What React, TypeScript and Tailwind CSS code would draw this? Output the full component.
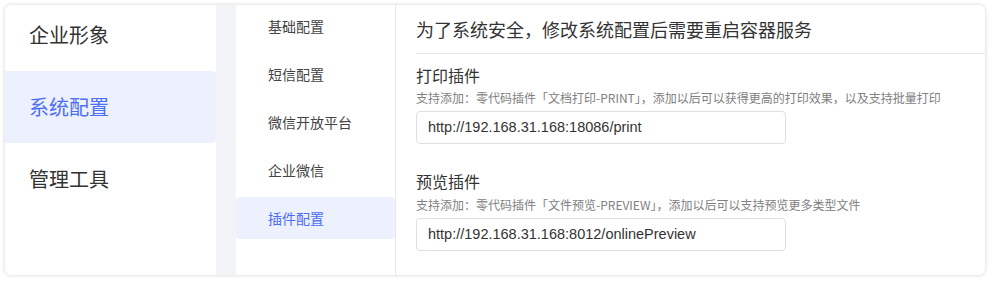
import React from "react";

const cjk = { fontFamily: '"Noto Sans CJK SC", "Liberation Sans", sans-serif' };

export default function App() {
  const left = ["企业形象", "系统配置", "管理工具"];
  const sub = ["基础配置", "短信配置", "微信开放平台", "企业微信", "插件配置"];
  return (
    <div className="w-[992px] h-[281px] bg-white pt-[5px] pl-[5px]" style={cjk}>
      <div className="w-[980px] h-[270px] rounded-[6px] bg-white shadow-[0_0_4px_rgba(0,0,0,0.18)] overflow-hidden flex">
        <div className="w-[211px] shrink-0 -mt-[6px]">
          {left.map((t, i) => (
            <div
              key={t}
              className={`h-[72px] flex items-center pl-[24px] text-[20px] leading-[28px] rounded-r-[4px] ${
                i === 1 ? "bg-[#edf0fd] text-[#4c6ef5]" : "text-[#333333]"
              }`}
            >
              {t}
            </div>
          ))}
        </div>
        <div className="w-[20px] shrink-0 bg-[#f3f4f8]" />
        <div className="w-[160px] shrink-0 border-r border-[#e8e8ea] flex flex-col gap-[6px]">
          {sub.map((t, i) => (
            <div
              key={t}
              className={`h-[42px] flex items-center pl-[32px] text-[14px] leading-[20px] rounded-[4px] ${
                i === 4 ? "bg-[#edf0fd] text-[#4c6ef5]" : "text-[#444444]"
              }`}
            >
              {t}
            </div>
          ))}
        </div>
        <div className="flex-1 pl-[20px]">
          <div className="h-[49px] border-b border-[#e6e6e8] flex items-center text-[18px] leading-[26px] text-[#333333] pb-[1px]">
            为了系统安全，修改系统配置后需要重启容器服务
          </div>
          <div className="pt-[9px]">
            <div className="text-[16px] leading-[24px] text-[#333333]">打印插件</div>
            <div className="text-[12px] leading-[20px] text-[#808080] mt-[1px]">
              支持添加：零代码插件「文档打印-PRINT」，添加以后可以获得更高的打印效果，以及支持批量打印
            </div>
            <div
              className="mt-[3px] w-[370px] h-[33px] border border-[#dcdfe6] rounded-[4px] flex items-center pl-[11px] text-[14.5px] text-[#333333]"
              style={{ fontFamily: '"Liberation Sans", sans-serif' }}
            >
              http://192.168.31.168:18086/print
            </div>
          </div>
          <div className="pt-[25px]">
            <div className="text-[16px] leading-[24px] text-[#333333]">预览插件</div>
            <div className="text-[12px] leading-[20px] text-[#808080] mt-[2px]">
              支持添加：零代码插件「文件预览-PREVIEW」，添加以后可以支持预览更多类型文件
            </div>
            <div
              className="mt-[3px] w-[370px] h-[33px] border border-[#dcdfe6] rounded-[4px] flex items-center pl-[11px] text-[14.5px] text-[#333333]"
              style={{ fontFamily: '"Liberation Sans", sans-serif' }}
            >
              http://192.168.31.168:8012/onlinePreview
            </div>
          </div>
        </div>
      </div>
    </div>
  );
}
